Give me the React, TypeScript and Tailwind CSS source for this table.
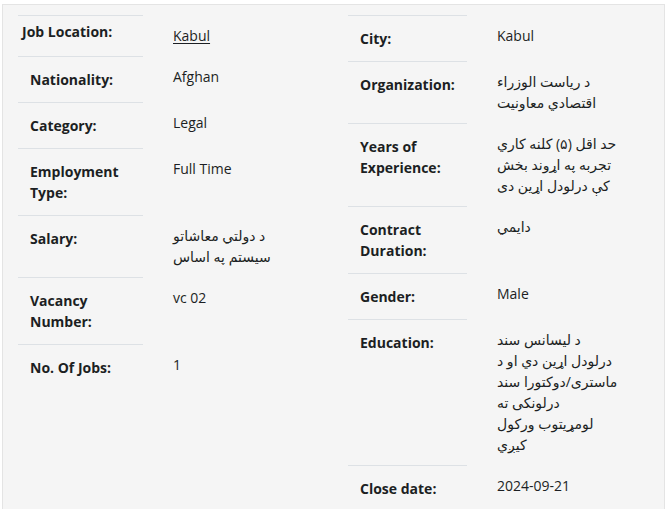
import React from 'react'

type Row = {
  label: string[]
  value: string[]
  link?: boolean
  first?: boolean
}

const leftRows: Row[] = [
  { label: ['Job Location:'], value: ['Kabul'], link: true, first: true },
  { label: ['Nationality:'], value: ['Afghan'] },
  { label: ['Category:'], value: ['Legal'] },
  { label: ['Employment', 'Type:'], value: ['Full Time'] },
  { label: ['Salary:'], value: ['د دولتي معاشاتو', 'سیستم په اساس'] },
  { label: ['Vacancy', 'Number:'], value: ['vc 02'] },
  { label: ['No. Of Jobs:'], value: ['1'] },
]

const rightRows: Row[] = [
  { label: ['City:'], value: ['Kabul'] },
  { label: ['Organization:'], value: ['د ریاست الوزراء', 'اقتصادي معاونیت'] },
  {
    label: ['Years of', 'Experience:'],
    value: ['حد اقل (۵) کلنه کاري', 'تجربه په اړوند بخش', 'کې درلودل اړین دی'],
  },
  { label: ['Contract', 'Duration:'], value: ['دایمي'] },
  { label: ['Gender:'], value: ['Male'] },
  {
    label: ['Education:'],
    value: [
      'د لیسانس سند',
      'درلودل اړین دي او د',
      'ماستری/دوکتورا سند',
      'درلونکی ته',
      'لومړیتوب ورکول',
      'کیږي',
    ],
  },
  { label: ['Close date:'], value: ['2024-09-21'] },
]

function DetailTable({ rows, labelWidth }: { rows: Row[]; labelWidth: string }) {
  return (
    <div className="flex flex-col">
      {rows.map((row) => (
        <div key={row.label.join(' ')} className="flex items-start">
          <div
            className={`${labelWidth} shrink-0 border-t border-[#dde1e5] font-bold ${
              row.first ? 'pl-1 pt-[5px] pb-2' : 'px-3 pt-3 pb-3'
            }`}
          >
            {row.label.map((l) => (
              <div key={l} className="whitespace-nowrap">
                {l}
              </div>
            ))}
          </div>
          <div className="ml-[30px] w-[130px] py-[10px]">
            {row.value.map((v) =>
              row.link ? (
                <a key={v} href="#" className="block underline underline-offset-2">
                  {v}
                </a>
              ) : (
                <div key={v} className="whitespace-nowrap">
                  {v}
                </div>
              ),
            )}
          </div>
        </div>
      ))}
    </div>
  )
}

export default function App() {
  return (
    <div className="min-h-[509px] bg-white pt-1 pl-0.5 font-['Open_Sans','DejaVu_Sans',sans-serif] text-[14px] leading-[21px] text-[#1c1f23]">
      <div className="w-[663px] min-h-[520px] border border-[#e4e4e4] bg-[#f5f5f5] px-[15px] pt-[10px]">
        <div className="flex">
          <div className="w-[330px] shrink-0">
            <DetailTable rows={leftRows} labelWidth="w-[125px]" />
          </div>
          <div className="flex-1">
            <DetailTable rows={rightRows} labelWidth="w-[119px]" />
          </div>
        </div>
      </div>
    </div>
  )
}
